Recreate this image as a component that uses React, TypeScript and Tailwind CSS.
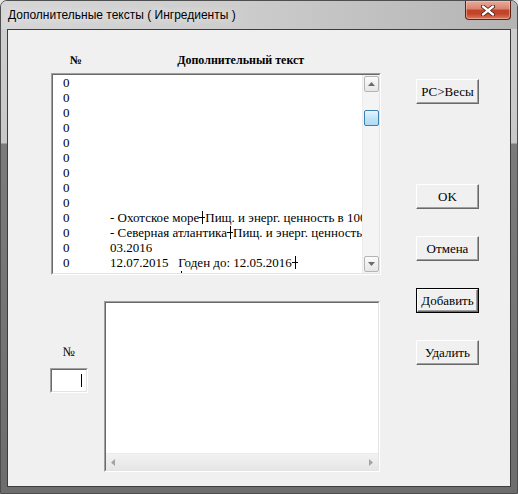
import React from "react"

const serif = { fontFamily: '"Liberation Serif", "Times New Roman", serif' }

const rows: string[] = [
  "", "", "", "", "", "", "", "", "",
  "- Охотское море┼Пищ. и энерг. ценность в 100 г",
  "- Северная атлантика┼Пищ. и энерг. ценность в 100 г",
  "03.2016",
  "12.07.2015   Годен до: 12.05.2016┼",
  "08.06.2015   ┼Годен до: 08.06.2016",
]

// line-break marker that the old list control draws in place of CR/LF
function Mark() {
  return (
    <svg width="6" height="13" viewBox="0 0 6 13" className="inline-block align-[-2px]">
      <path d="M3.5 0 V13 M0 6.5 H6" stroke="#000" strokeWidth="1" />
    </svg>
  )
}

function RowText({ text }: { text: string }) {
  const parts = text.split("┼")
  return (
    <>
      {parts.map((p, i) => (
        <React.Fragment key={i}>
          {i > 0 && <Mark />}
          {p}
        </React.Fragment>
      ))}
    </>
  )
}

function Arrow({ dir, color = "#5a5a5a" }: { dir: "up" | "down" | "left" | "right"; color?: string }) {
  const pts = {
    up: "0,4 3.5,0 7,4",
    down: "0,0 3.5,4 7,0",
    left: "4,0 0,3.5 4,7",
    right: "0,0 4,3.5 0,7",
  }[dir]
  const vertical = dir === "up" || dir === "down"
  return (
    <svg width={vertical ? 7 : 4} height={vertical ? 4 : 7} viewBox={vertical ? "0 0 7 4" : "0 0 4 7"}>
      <polygon points={pts} fill={color} />
    </svg>
  )
}

function ScrollButton({ dir }: { dir: "up" | "down" }) {
  return (
    <div className="w-[15px] h-[16px] mx-[1px] flex items-center justify-center rounded-[2px] border border-[#b5b5b5] bg-[linear-gradient(to_bottom,#fbfbfb,#e6e6e6)]">
      <Arrow dir={dir} color="#6b6b6b" />
    </div>
  )
}

function Button({ label, isDefault }: { label: string; isDefault?: boolean }) {
  return (
    <div className={`w-[63px] h-[25px] ${isDefault ? "border border-black" : ""}`} style={serif}>
      <div className="w-full h-full flex items-center justify-center border border-t-white border-l-white border-r-[#696969] border-b-[#696969] shadow-[inset_-1px_-1px_0_#a0a0a0] bg-[#f0f0f0] text-[13px] text-black">
        {label}
      </div>
    </div>
  )
}

function Sunken({ className, children }: { className: string; children?: React.ReactNode }) {
  return (
    <div className={`border border-t-[#a0a0a0] border-l-[#a0a0a0] border-r-white border-b-white ${className}`}>
      <div className="w-full h-full border border-t-[#696969] border-l-[#696969] border-r-[#e3e3e3] border-b-[#e3e3e3] bg-white overflow-hidden">
        {children}
      </div>
    </div>
  )
}

export default function App() {
  return (
    <div className="w-[518px] h-[494px] bg-[#e4e4e4]">
      <div className="h-full flex flex-col rounded-t-[7px] border border-[#4e4e4e] overflow-hidden bg-[linear-gradient(to_bottom,#cfcfcf_0px,#c8c8c8_142px,#7b7b7b_143px,#6d6d6d_100%)]">
        {/* title bar */}
        <div className="h-[28px] flex items-start bg-[linear-gradient(to_right,#d6d6d6,#cdcdcd_45%,#bdbdbd_80%,#b4b4b4)]">
          <span
            className="ml-[7px] mt-[7px] text-[12px] leading-[14px] text-black [text-shadow:0_0_8px_#ffffff]"
            style={{ fontFamily: '"Liberation Sans", Arial, sans-serif' }}
          >
            Дополнительные тексты ( Ингредиенты )
          </span>
          <div className="ml-auto mr-[6px] w-[46px] h-[19px] flex items-center justify-center rounded-b-[4px] border border-t-0 border-[#5b2419] bg-[linear-gradient(to_bottom,#e9aa9c_0%,#d9826d_45%,#c0442a_50%,#c24329_70%,#dc7a5c_100%)] shadow-[inset_0_0_0_1px_rgba(255,210,200,0.45)]">
            <svg width="14" height="11" viewBox="0 0 14 11">
              <path d="M2 1.5 L12 9.5 M12 1.5 L2 9.5" stroke="#3a1a14" strokeWidth="4" strokeLinecap="round" />
              <path d="M2 1.5 L12 9.5 M12 1.5 L2 9.5" stroke="#ffffff" strokeWidth="2.4" strokeLinecap="round" />
            </svg>
          </div>
        </div>

        {/* client area */}
        <div className="flex-1 mx-[6px] mb-[6px] border border-[#3c3c3c] bg-[#f0f0f0] flex" style={serif}>
          <div className="ml-[42px] w-[331px] flex flex-col">
            <div className="mt-[20px] h-[20px] ml-[1px] flex items-center font-bold text-[12px] text-black">
              <span className="w-[50px] text-center">№</span>
              <span className="w-[284px] text-center">Дополнительный текст</span>
            </div>

            <Sunken className="mt-[3px] ml-[1px] w-[330px] h-[202px]">
              <div className="h-full flex">
                <div className="flex-1 overflow-hidden text-[13px] leading-[15px] text-black">
                  {rows.map((text, i) => (
                    <div key={i} className="h-[15px] flex whitespace-pre">
                      <span className="w-[57px] pl-[10px] shrink-0">0</span>
                      <span className="overflow-hidden">
                        <RowText text={text} />
                      </span>
                    </div>
                  ))}
                </div>
                <div className="w-[17px] h-full flex flex-col py-[1px] bg-[#f4f4f4] border-l border-[#ececec]">
                  <ScrollButton dir="up" />
                  <div className="mt-[18px] mx-[1px] w-[15px] h-[16px] rounded-[2px] border border-[#3c7fb1] bg-[linear-gradient(to_bottom,#e6f5fd,#c4e4f7_50%,#b0d9f3)]" />
                  <div className="flex-1" />
                  <ScrollButton dir="down" />
                </div>
              </div>
            </Sunken>

            <div className="mt-[26px] flex items-start">
              <div className="w-[38px] flex flex-col items-center">
                <span className="mt-[43px] text-[13px] leading-[15px] text-black">№</span>
                <div className="mt-[9px] w-[38px] h-[25px] border border-t-[#a0a0a0] border-l-[#a0a0a0] border-r-white border-b-white">
                  <div className="w-full h-full border border-t-[#696969] border-l-[#696969] border-r-[#e3e3e3] border-b-[#e3e3e3] bg-white flex items-center justify-end pr-[4px]">
                    <div className="w-[1px] h-[13px] bg-black" />
                  </div>
                </div>
              </div>
              <Sunken className="ml-[16px] w-[276px] h-[171px]">
                <div className="h-full flex flex-col">
                  <div className="flex-1" />
                  <div className="h-[17px] flex items-center justify-between px-[5px] bg-[linear-gradient(to_bottom,#f2f2f2,#e6e6e6)] border-t border-[#ececec]">
                    <Arrow dir="left" color="#a3a3a3" />
                    <Arrow dir="right" color="#a3a3a3" />
                  </div>
                </div>
              </Sunken>
            </div>
          </div>

          <div className="ml-[35px] pt-[49px] flex flex-col">
            <Button label="PC>Весы" />
            <div className="mt-[80px]">
              <Button label="OK" />
            </div>
            <div className="mt-[27px]">
              <Button label="Отмена" />
            </div>
            <div className="mt-[27px]">
              <Button label="Добавить" isDefault />
            </div>
            <div className="mt-[27px]">
              <Button label="Удалить" />
            </div>
          </div>
        </div>
      </div>
    </div>
  )
}
